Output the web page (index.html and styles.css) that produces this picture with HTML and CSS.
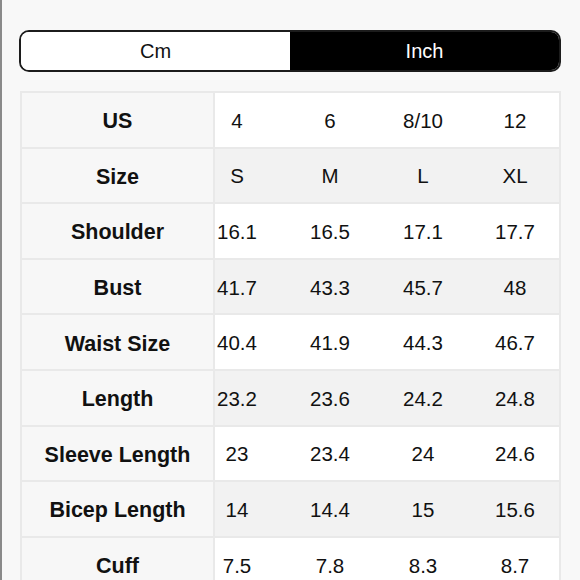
FILE: index.html
```html
<!DOCTYPE html>
<html>
<head>
<meta charset="utf-8">
<link rel="stylesheet" href="styles.css">
</head>
<body>
<div class="page">
  <div class="toggle">
    <div class="seg seg-off">Cm</div>
    <div class="seg seg-on">Inch</div>
  </div>
  <div class="table">
    <div class="lab">US</div><div class="val">4</div><div class="val">6</div><div class="val">8/10</div><div class="val last">12</div>
    <div class="lab">Size</div><div class="val alt">S</div><div class="val alt">M</div><div class="val alt">L</div><div class="val alt last">XL</div>
    <div class="lab">Shoulder</div><div class="val">16.1</div><div class="val">16.5</div><div class="val">17.1</div><div class="val last">17.7</div>
    <div class="lab">Bust</div><div class="val alt">41.7</div><div class="val alt">43.3</div><div class="val alt">45.7</div><div class="val alt last">48</div>
    <div class="lab">Waist Size</div><div class="val">40.4</div><div class="val">41.9</div><div class="val">44.3</div><div class="val last">46.7</div>
    <div class="lab">Length</div><div class="val alt">23.2</div><div class="val alt">23.6</div><div class="val alt">24.2</div><div class="val alt last">24.8</div>
    <div class="lab">Sleeve Length</div><div class="val">23</div><div class="val">23.4</div><div class="val">24</div><div class="val last">24.6</div>
    <div class="lab">Bicep Length</div><div class="val alt">14</div><div class="val alt">14.4</div><div class="val alt">15</div><div class="val alt last">15.6</div>
    <div class="lab">Cuff</div><div class="val">7.5</div><div class="val">7.8</div><div class="val">8.3</div><div class="val last">8.7</div>
  </div>
</div>
</body>
</html>
```

FILE: styles.css
```css
html, body {
  margin: 0;
  padding: 0;
  height: 100%;
  overflow: hidden;
  background: #f8f8f8;
}
body {
  font-family: "Liberation Sans", Arial, sans-serif;
  color: #111;
}
.page {
  box-sizing: border-box;
  height: 100%;
  border-left: 2px solid #8a8a8a;
  padding: 30px 19px 0 17px;
}
.toggle {
  display: flex;
  height: 42px;
  box-sizing: border-box;
  border: 2px solid #1c1c1c;
  border-radius: 10px;
  overflow: hidden;
}
.seg {
  flex: 1;
  display: flex;
  align-items: center;
  justify-content: center;
  font-size: 20px;
}
.seg-off {
  background: #fff;
  color: #111;
}
.seg-on {
  background: #000;
  color: #fff;
}
.table {
  margin-top: 19px;
  margin-left: 1px;
  display: grid;
  grid-template-columns: 193px 93px 93px 93px 1fr;
  grid-auto-rows: 53.6px;
  row-gap: 2px;
  column-gap: 0;
  padding: 2px;
  background: #e9e9e9;
}
.lab {
  background: #f7f7f7;
  margin-right: 2px;
  padding-top: 4px;
  box-sizing: border-box;
  font-weight: bold;
  font-size: 21.5px;
  display: flex;
  align-items: center;
  justify-content: center;
}
.val {
  background: #fff;
  box-sizing: border-box;
  padding-top: 2px;
  font-size: 20.5px;
  display: flex;
  align-items: center;
  justify-content: center;
  padding-right: 49px;
}
.val.last {
  padding-right: 23px;
}
.val.alt {
  background: #f2f2f2;
}
```
